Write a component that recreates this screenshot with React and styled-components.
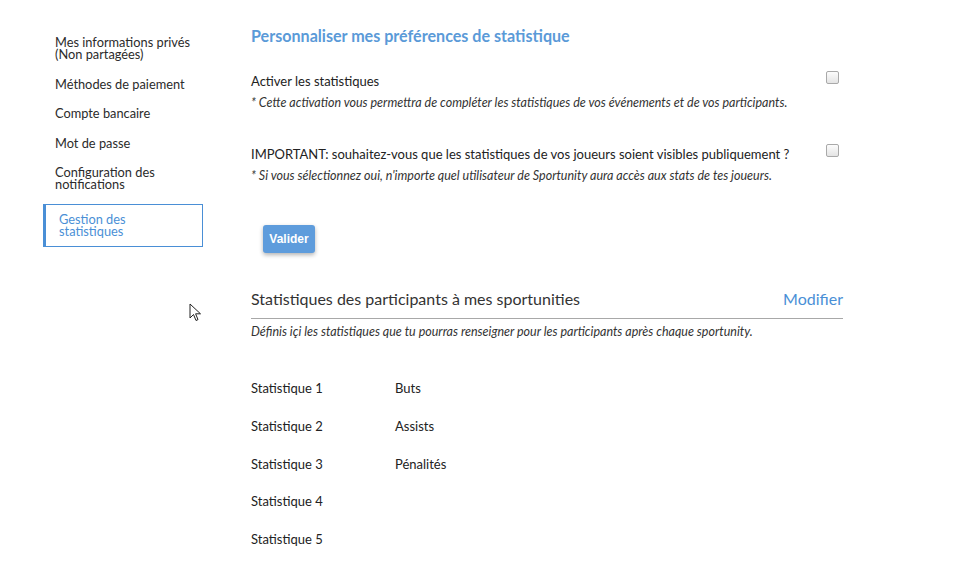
import React from "react";
import styled, { createGlobalStyle } from "styled-components";

const Global = createGlobalStyle`
  html, body { margin: 0; padding: 0; background: #fff; }
  body { font-family: Lato, "Open Sans", sans-serif; color: #333; }
  * { box-sizing: border-box; }
`;

const Page = styled.div`
  position: relative;
  display: flex;
  align-items: flex-start;
  gap: 48px;
  padding: 26px 0 0 43px;
  width: 977px;
  height: 569px;
  overflow: hidden;
`;

const Sidebar = styled.nav`
  width: 160px;
  display: flex;
  flex-direction: column;
  margin-top: 1px;
`;

const NavItem = styled.div`
  font-size: 12.8px;
  line-height: 12px;
  color: ${(p) => (p.$active ? "#4a8fd6" : "#2b2b2b")};
  padding: ${(p) => (p.$active ? "8.5px 10px 8.5px 13px" : "9px 10px 8.5px 12px")};
  border: ${(p) => (p.$active ? "1px solid #4a8fd6" : "none")};
  border-left: ${(p) => (p.$active ? "3px solid #4a8fd6" : "none")};
  margin-top: ${(p) => (p.$active ? "5px" : "0")};
`;

const Main = styled.main`
  width: 592px;
  display: flex;
  flex-direction: column;
`;

const Title = styled.h1`
  margin: 0;
  font-size: 16.1px;
  line-height: 19px;
  font-weight: 700;
  color: #5a9ad8;
`;

const Option = styled.div`
  display: flex;
  flex-direction: column;
  margin-top: ${(p) => p.$mt}px;
`;

const OptionRow = styled.div`
  display: flex;
  align-items: flex-start;
  justify-content: space-between;
`;

const Label = styled.div`
  font-size: 13px;
  line-height: 16px;
  color: #222;
`;

const Checkbox = styled.span`
  width: 13px;
  height: 13px;
  margin-right: 4px;
  margin-top: ${(p) => p.$mt}px;
  border: 1px solid #a9a9a9;
  border-radius: 2px;
  background: linear-gradient(#fcfcfc, #e4e4e4);
`;

const Note = styled.div`
  margin-top: 6px;
  font-size: 12.5px;
  line-height: 15px;
  font-style: italic;
  color: #333;
`;

const Button = styled.button`
  align-self: flex-start;
  margin: 42px 0 0 12px;
  width: 52px;
  height: 28px;
  border: none;
  border-radius: 3px;
  background: #5e9cdc;
  color: #fff;
  font-family: "Liberation Sans", Arial, sans-serif;
  font-weight: 700;
  font-size: 12px;
  box-shadow: 0 2px 4px rgba(0, 0, 0, 0.3);
  padding: 0;
`;

const SectionHead = styled.div`
  margin-top: 36px;
  display: flex;
  justify-content: space-between;
  align-items: center;
  padding-bottom: 10px;
  border-bottom: 1px solid #a8a8a8;
`;

const SectionTitle = styled.div`
  font-size: 16px;
  line-height: 19px;
  color: #333;
`;

const Link = styled.a`
  font-size: 16px;
  line-height: 19px;
  color: #4a8fd6;
  text-decoration: none;
`;

const SectionNote = styled(Note)`
  margin-top: 5px;
`;

const StatList = styled.div`
  margin-top: 41px;
  display: grid;
  grid-template-columns: 144px 1fr;
  grid-auto-rows: 37.8px;
`;

const Cell = styled.div`
  font-size: 13px;
  line-height: 16px;
  color: #222;
`;

const Cursor = styled.svg`
  position: absolute;
  left: 189px;
  top: 303px;
`;

const navItems = [
  ["Mes informations privés", "(Non partagées)"],
  ["Méthodes de paiement"],
  ["Compte bancaire"],
  ["Mot de passe"],
  ["Configuration des", "notifications"],
];

const stats = [
  ["Statistique 1", "Buts"],
  ["Statistique 2", "Assists"],
  ["Statistique 3", "Pénalités"],
  ["Statistique 4", ""],
  ["Statistique 5", ""],
];

export default function App() {
  return (
    <>
      <Global />
      <Page>
        <Sidebar>
          {navItems.map((lines, i) => (
            <NavItem key={i}>
              {lines.map((l, j) => (
                <div key={j}>{l}</div>
              ))}
            </NavItem>
          ))}
          <NavItem $active>
            <div>Gestion des</div>
            <div>statistiques</div>
          </NavItem>
        </Sidebar>
        <Main>
          <Title>Personnaliser mes préférences de statistique</Title>
          <Option $mt={28}>
            <OptionRow>
              <Label>Activer les statistiques</Label>
              <Checkbox $mt={-2} />
            </OptionRow>
            <Note>* Cette activation vous permettra de compléter les statistiques de vos événements et de vos participants.</Note>
          </Option>
          <Option $mt={36}>
            <OptionRow>
              <Label>IMPORTANT: souhaitez-vous que les statistiques de vos joueurs soient visibles publiquement ?</Label>
              <Checkbox $mt={-2} />
            </OptionRow>
            <Note>* Si vous sélectionnez oui, n'importe quel utilisateur de Sportunity aura accès aux stats de tes joueurs.</Note>
          </Option>
          <Button>Valider</Button>
          <SectionHead>
            <SectionTitle>Statistiques des participants à mes sportunities</SectionTitle>
            <Link>Modifier</Link>
          </SectionHead>
          <SectionNote>Définis içi les statistiques que tu pourras renseigner pour les participants après chaque sportunity.</SectionNote>
          <StatList>
            {stats.map(([a, b]) => (
              <React.Fragment key={a}>
                <Cell>{a}</Cell>
                <Cell>{b}</Cell>
              </React.Fragment>
            ))}
          </StatList>
        </Main>
        <Cursor width="14" height="20" viewBox="0 0 14 20">
          <path d="M1 1 L1 15 L4.5 11.5 L7 17.5 L9 16.6 L6.6 10.8 L11.5 10.8 Z" fill="#fff" stroke="#222" strokeWidth="1" strokeLinejoin="miter" />
        </Cursor>
      </Page>
    </>
  );
}
